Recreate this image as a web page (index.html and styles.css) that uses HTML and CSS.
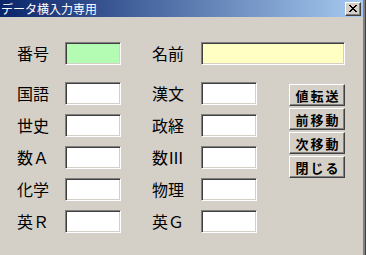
FILE: index.html
```html
<!DOCTYPE html>
<html>
<head>
  <meta charset="UTF-8">
  <title>データ横入力専用</title>
  <link rel="stylesheet" href="styles.css">
</head>
<body>
  <div class="window">
    <div class="titlebar">
      <span class="title">データ横入力専用</span>
      <button class="close-btn">
        <svg width="8" height="7" viewBox="0 0 8 7">
          <path d="M0 0h2v1h1v1h2v-1h1v-1h2v1h-1v1h-1v1h-1v1h1v1h1v1h1v1h-2v-1h-1v-1h-2v1h-1v1h-2v-1h1v-1h1v-1h1v-1h-1v-1h-1v-1h-1z" fill="#000"/>
        </svg>
      </button>
    </div>
    <div class="form">
      <div class="grid">
        <label class="lbl left r1">番号</label>
        <input class="box left-in green" type="text">
        <label class="lbl right">名前</label>
        <input class="box wide yellow" type="text">

        <label class="lbl left">国語</label>
        <input class="box left-in" type="text">
        <label class="lbl right">漢文</label>
        <input class="box right-in" type="text">

        <label class="lbl left">世史</label>
        <input class="box left-in" type="text">
        <label class="lbl right">政経</label>
        <input class="box right-in" type="text">

        <label class="lbl left">数Ａ</label>
        <input class="box left-in" type="text">
        <label class="lbl right">数Ⅲ</label>
        <input class="box right-in" type="text">

        <label class="lbl left">化学</label>
        <input class="box left-in" type="text">
        <label class="lbl right">物理</label>
        <input class="box right-in" type="text">

        <label class="lbl left">英Ｒ</label>
        <input class="box left-in" type="text">
        <label class="lbl right">英Ｇ</label>
        <input class="box right-in" type="text">

        <div class="buttons">
          <button class="cmd">値転送</button>
          <button class="cmd">前移動</button>
          <button class="cmd">次移動</button>
          <button class="cmd">閉じる</button>
        </div>
      </div>
    </div>
  </div>
</body>
</html>
```

FILE: styles.css
```css
html, body { margin: 0; height: 100%; }
body {
  background: #d4d0c8;
  font-family: "Noto Sans CJK JP", "DejaVu Sans", sans-serif;
  overflow: hidden;
}
.window {
  height: 100%;
  border-right: 1px solid #404040;
  box-shadow: inset -2px 0 #808080;
  box-sizing: border-box;
}
.titlebar {
  height: 17px;
  margin-right: 2px;
  background: linear-gradient(to right, #0a246a, #a6caf0);
  display: flex;
  align-items: center;
  padding-left: 1px;
  padding-right: 2px;
}
.title {
  color: #fff;
  font-size: 12px;
  line-height: 17px;
}
.close-btn {
  margin-left: auto;
  width: 16px;
  height: 14px;
  padding: 0;
  background: #d4d0c8;
  border: 1px solid;
  border-color: #fff #404040 #404040 #fff;
  box-shadow: inset -1px -1px #808080;
  display: flex;
  align-items: center;
  justify-content: center;
}
.form {
  padding: 25px 0 0 17px;
}
.grid {
  display: grid;
  grid-template-columns: 48px 56px 31px 49px 56px 32px 56px;
  grid-template-rows: 31px repeat(5, 23px);
  row-gap: 9px;
  grid-auto-flow: row dense;
}
.lbl {
  font-size: 16px;
  line-height: 23px;
  color: #000;
  white-space: nowrap;
  align-self: start;
}
.left { grid-column: 1; }
.right { grid-column: 4; }
.left-in { grid-column: 2; }
.right-in { grid-column: 5; }
.box {
  width: 100%;
  height: 23px;
  box-sizing: border-box;
  margin: 0;
  padding: 0;
  background: #fff;
  border: 1px solid;
  border-color: #808080 #fff #fff #808080;
  box-shadow: inset 1px 1px #404040, inset -1px -1px #d4d0c8;
  align-self: start;
}
.green { background: #b4fcb4; }
.yellow { background: #ffffc4; }
.wide { grid-column: 5 / 8; }
.buttons {
  grid-column: 7;
  grid-row: 2 / 6;
  display: flex;
  flex-direction: column;
  gap: 2px;
  padding-top: 2px;
}
.cmd {
  height: 22px;
  margin: 0;
  padding: 0;
  background: #d4d0c8;
  border: 1px solid;
  border-color: #fff #404040 #404040 #fff;
  box-shadow: inset -1px -1px #808080;
  font-family: "Noto Sans CJK JP", sans-serif;
  font-size: 13px;
  font-weight: bold;
  letter-spacing: 2px;
  text-indent: 2px;
  color: #000;
}
```
